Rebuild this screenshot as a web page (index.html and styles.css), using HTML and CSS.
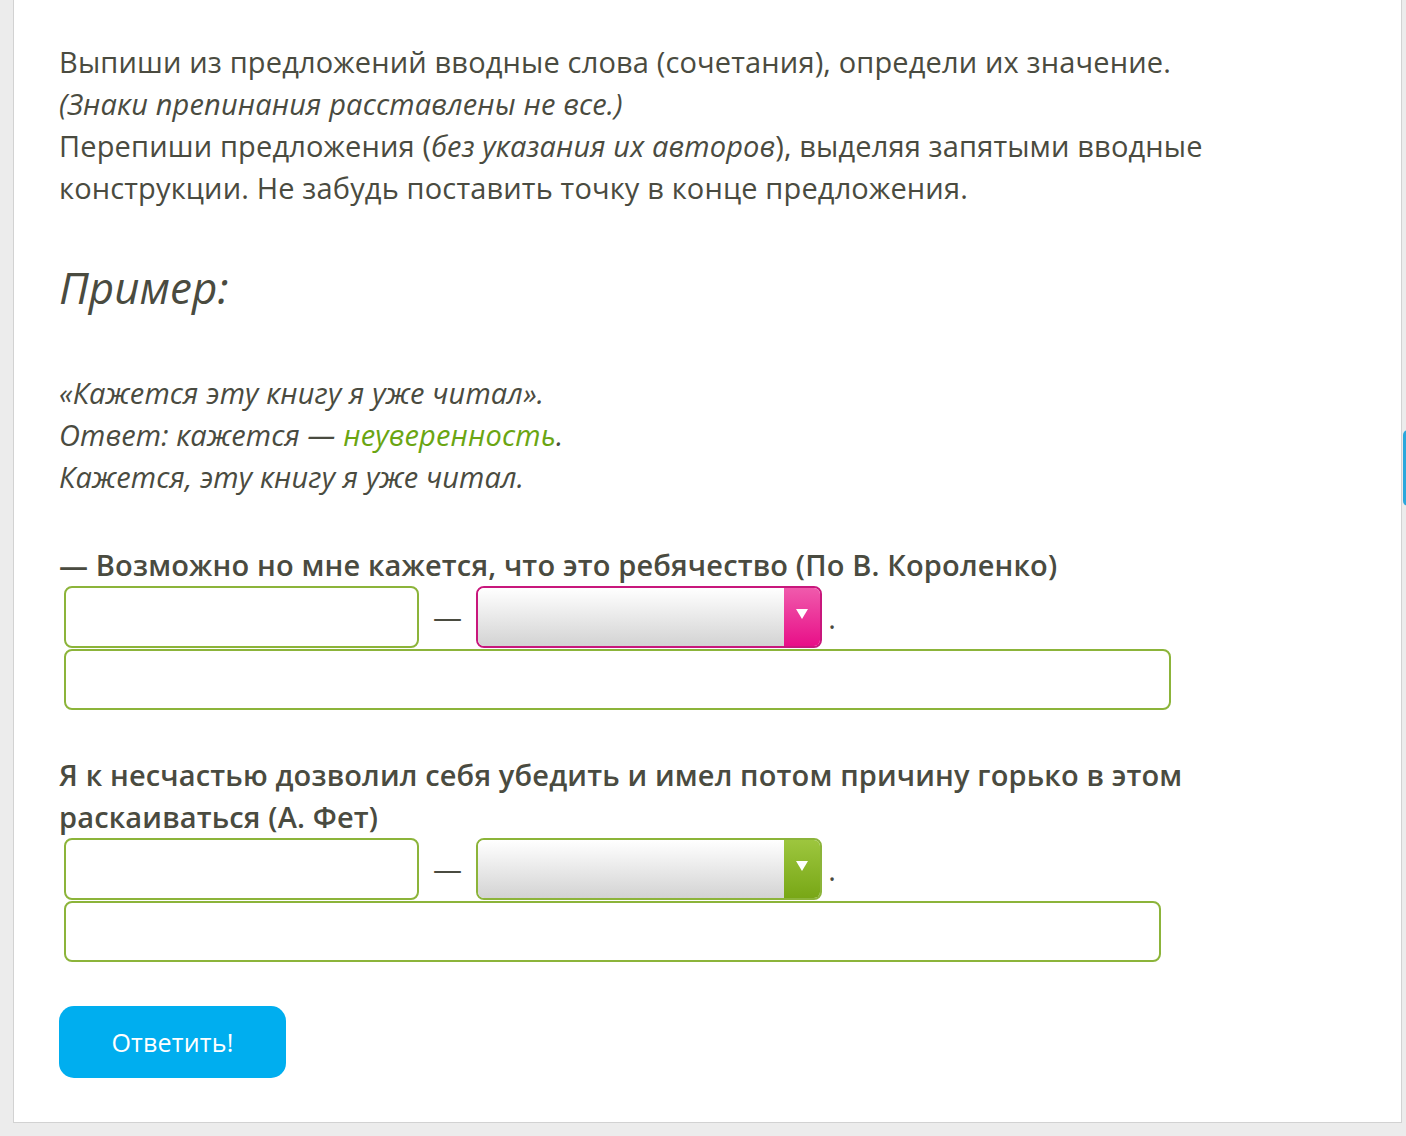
FILE: index.html
```html
<!DOCTYPE html>
<html lang="ru">
<head>
  <meta charset="UTF-8" />
  <meta name="viewport" content="width=device-width, initial-scale=1" />
  <title>Вводные слова</title>
  <link rel="stylesheet" href="styles.css">
</head>
<body>

  <!-- карточка задания -->
  <main class="task">
    <p class="task-text">
      Выпиши из предложений вводные слова (сочетания), определи их значение.<br>
      <em>(Знаки препинания расставлены не все.)</em><br>
      Перепиши предложения (<em>без указания их авторов</em>), выделяя запятыми вводные конструкции. Не забудь поставить точку в конце предложения.
    </p>

    <h2 class="example-title">Пример:</h2>

    <p class="example">
      «Кажется эту книгу я уже читал».<br>
      Ответ: кажется — <span class="hint">неуверенность</span>.<br>
      Кажется, эту книгу я уже читал.
    </p>

    <!-- первое предложение -->
    <div class="question">
      <p class="question-text">— Возможно но мне кажется, что это ребячество (По В. Короленко)</p>
      <div class="answer-row">
        <input type="text" class="field field-short" />
        <span class="dash">—</span>
        <div class="dropdown dropdown-pink">
          <span class="dropdown-box"></span>
          <span class="dropdown-arrow"></span>
        </div>
        <span class="dot">.</span>
      </div>
      <input type="text" class="field field-long" />
    </div>

    <!-- второе предложение -->
    <div class="question">
      <p class="question-text">Я к несчастью дозволил себя убедить и имел потом причину горько в этом раскаиваться (А. Фет)</p>
      <div class="answer-row">
        <input type="text" class="field field-short" />
        <span class="dash">—</span>
        <div class="dropdown dropdown-green">
          <span class="dropdown-box"></span>
          <span class="dropdown-arrow"></span>
        </div>
        <span class="dot">.</span>
      </div>
      <input type="text" class="field field-long field-long-2" />
    </div>

    <button class="submit-btn">Ответить!</button>
  </main>

  <!-- синяя вкладка справа -->
  <div class="side-tab"></div>

</body>
</html>
```

FILE: styles.css
```css
* {
  box-sizing: border-box;
}
body {
  margin: 0;
  padding: 0;
  background-color: #ececec;
  font-family: "Open Sans", "Noto Sans", sans-serif;
  color: #4a4b40;
  min-height: 100vh;
}

/* карточка задания */
.task {
  margin-left: 13px;
  width: 1389px;
  background: #fff;
  border: 1px solid #d2d2d2;
  border-top: none;
  padding: 41px 140px 44px 45px;
  font-size: 29px;
  letter-spacing: 0.15px;
  line-height: 42px;
}

.task p {
  margin: 0;
}

.task-text em,
.example {
  font-style: italic;
}

.example-title {
  margin: 48px 0 0;
  font-size: 44px;
  line-height: 60px;
  font-weight: 400;
  font-style: italic;
  letter-spacing: 0;
}

.example {
  margin-top: 55px !important;
}

.hint {
  color: #6aa512;
}

/* вопросы */
.question {
  margin-top: 46px;
}
.question + .question {
  margin-top: 44px;
}
.question-text {
  font-weight: 600;
}

.answer-row {
  display: flex;
  align-items: flex-start;
  height: 62px;
  padding-left: 5px;
}

.field {
  display: block;
  height: 62px;
  border: 2px solid #8cb43a;
  border-radius: 8px;
  background: #fff;
  font-family: inherit;
  font-size: 24px;
  padding: 0 12px;
  outline: none;
}
.field-short {
  width: 355px;
}
.field-long {
  width: 1107px;
  height: 61px;
  margin: 1px 0 0 5px;
}
.field-long-2 {
  width: 1097px;
}

.dash {
  margin: 0 14px;
  line-height: 62px;
}

/* выпадающий список */
.dropdown {
  display: flex;
  width: 346px;
  height: 62px;
  border: 2px solid #8cb43a;
  border-radius: 8px;
  overflow: hidden;
}
.dropdown-box {
  flex: 1;
  background: linear-gradient(#ffffff, #d3d3d3);
}
.dropdown-arrow {
  width: 36px;
  position: relative;
  background: linear-gradient(#9dc63e, #78a716);
}
.dropdown-arrow::after {
  content: "";
  position: absolute;
  left: 12px;
  top: 21px;
  border-left: 6px solid transparent;
  border-right: 6px solid transparent;
  border-top: 10px solid #fff;
}
.dropdown-pink {
  border-color: #c8177c;
}
.dropdown-pink .dropdown-arrow {
  background: linear-gradient(#f05aac, #e80f88);
}

.dot {
  margin-left: 6px;
  line-height: 62px;
  margin-top: 1px;
}

/* кнопка ответа */
.submit-btn {
  display: block;
  margin-top: 44px;
  width: 227px;
  height: 72px;
  border: none;
  border-radius: 15px;
  background-color: #00aeef;
  color: #fff;
  font-family: inherit;
  font-size: 25px;
  letter-spacing: 0.2px;
  cursor: pointer;
}

.side-tab {
  position: fixed;
  right: -10px;
  top: 430px;
  width: 13px;
  height: 76px;
  border-radius: 5px;
  background: #2aa8dc;
}
```
